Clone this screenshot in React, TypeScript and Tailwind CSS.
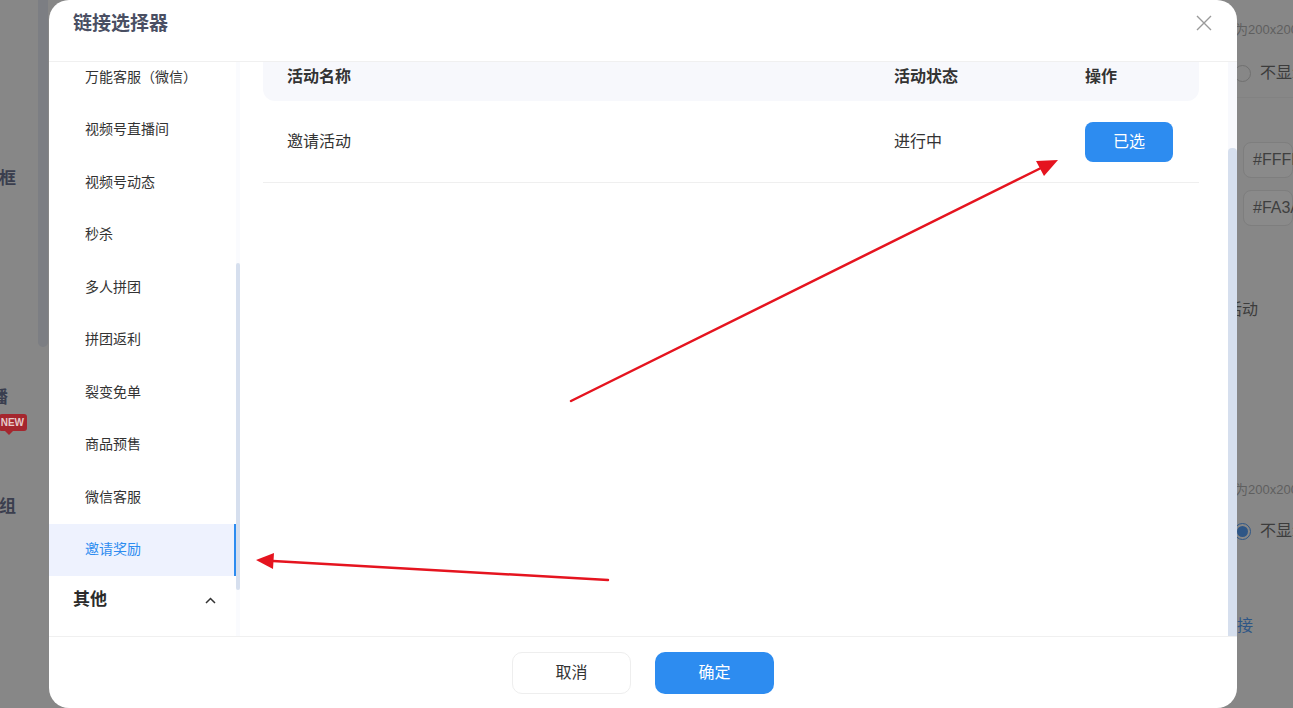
const menus = [
  '万能客服（微信）',
  '视频号直播间',
  '视频号动态',
  '秒杀',
  '多人拼团',
  '拼团返利',
  '裂变免单',
  '商品预售',
  '微信客服',
  '邀请奖励',
];

function PageLeft() {
  return (
    <div className="flex w-[49px] shrink-0">
      <div className="flex w-[38px] flex-col overflow-hidden">
        <div className="mt-[168px] flex h-[22px] items-center justify-end pr-[22px] whitespace-nowrap text-[17px] font-bold text-[#3a3e4e]">
          输入框
        </div>
        <div className="mt-[197px] flex h-[22px] items-center justify-end pr-[30px] whitespace-nowrap text-[17px] font-bold text-[#3a3e4e]">
          直播
        </div>
        <div className="mt-[5px] flex justify-end pr-[11px]">
          <div className="relative flex h-[17px] items-center rounded-[3px] bg-[#a5262e] pl-[2px] pr-[3px] text-[10px] font-bold leading-none text-[#e6caca]">
            NEW
            <span className="absolute -bottom-[4px] left-[6px] h-0 w-0 border-x-[4px] border-t-[4px] border-x-transparent border-t-[#a5262e]" />
          </div>
        </div>
        <div className="mt-[65px] flex h-[22px] items-center justify-end pr-[22px] whitespace-nowrap text-[17px] font-bold text-[#3a3e4e]">
          分组
        </div>
      </div>
      <div className="h-[347px] w-[10px] rounded-b-[5px] bg-[#7c7e83]" />
    </div>
  );
}

function PageRight() {
  return (
    <div className="flex w-[72px] shrink-0 flex-col overflow-hidden whitespace-nowrap">
      <div className="mt-[20px] flex h-[20px] items-center pl-[14px] text-[13px] text-[#5f5f5f]">
        为200x200
      </div>
      <div className="mt-[23px] flex h-[20px] items-center gap-[9px] pl-[13px]">
        <span className="h-[17px] w-[17px] shrink-0 rounded-full border border-[#707070]" />
        <span className="text-[16px] text-[#3c3c3c]">不显示</span>
      </div>
      <div className="mt-[14px] h-px bg-[#828282]" />
      <div className="mt-[44px] ml-[22px] flex h-[36px] items-center rounded-[8px] border border-[#7e7e7e] bg-[#8a8a8a] pl-[9px] text-[16px] text-[#3f3f3f]">
        #FFFFFF
      </div>
      <div className="mt-[12px] ml-[22px] flex h-[36px] items-center rounded-[8px] border border-[#7e7e7e] bg-[#8a8a8a] pl-[9px] text-[16px] text-[#3f3f3f]">
        #FA3A3A
      </div>
      <div className="mt-[74px] flex h-[20px] items-center pl-[5px] text-[16px] text-[#3c3c3c]">
        活动
      </div>
      <div className="mt-[160px] flex h-[20px] items-center pl-[14px] text-[13px] text-[#5f5f5f]">
        为200x200
      </div>
      <div className="mt-[21px] flex h-[20px] items-center gap-[9px] pl-[13px]">
        <span className="flex h-[17px] w-[17px] shrink-0 items-center justify-center rounded-full border border-[#2e5686]">
          <span className="h-[11px] w-[11px] rounded-full bg-[#2e5686]" />
        </span>
        <span className="text-[16px] text-[#3c3c3c]">不显示</span>
      </div>
      <div className="mt-[75px] flex h-[20px] items-center text-[16px] text-[#2e5686]">
        链接
      </div>
    </div>
  );
}

export default function App() {
  return (
    <div className="relative h-[708px] w-[1293px] overflow-hidden bg-[#878787] font-['Liberation_Sans','Noto_Sans_CJK_SC',sans-serif]">
      {/* dimmed page behind the dialog */}
      <div className="flex h-full justify-between">
        <PageLeft />
        <PageRight />
      </div>

      {/* dialog */}
      <div className="absolute left-[49px] top-0 flex h-[708px] w-[1188px] flex-col overflow-hidden rounded-[20px] bg-white">
        <div className="flex h-[62px] shrink-0 items-start justify-between border-b border-[#f0f0f0] pl-[24px] pr-[25px]">
          <h2 className="pt-[11px] text-[19px] font-bold leading-[26px] text-[#4a4f63]">链接选择器</h2>
          <svg width="16" height="16" viewBox="0 0 16 16" className="mt-[15px]" fill="none" stroke="#9a9a9a" strokeWidth="1.4">
            <path d="M1 1 15 15M15 1 1 15" />
          </svg>
        </div>

        <div className="flex min-h-0 flex-1">
          {/* menu */}
          <div className="flex w-[191px] shrink-0">
            <div className="w-[187px] overflow-hidden">
              <div className="-mt-[11px]">
                {menus.map((m, i) => {
                  const active = i === menus.length - 1;
                  return (
                    <div
                      key={m}
                      className={`flex h-[52.5px] items-center pl-[36px] text-[14px] ${
                        active ? 'border-r-2 border-[#2d8cf0] bg-[#eef2fe] text-[#2d8cf0]' : 'text-[#333]'
                      }`}
                    >
                      {m}
                    </div>
                  );
                })}
                <div className="flex h-[48px] items-center justify-between pl-[24px] pr-[20px]">
                  <span className="text-[17px] font-bold text-[#2b2b2b]">其他</span>
                  <svg width="11" height="7" viewBox="0 0 11 7" fill="none" stroke="#333" strokeWidth="1.5">
                    <path d="M1 6 5.5 1.5 10 6" />
                  </svg>
                </div>
              </div>
            </div>
            <div className="w-[4px] bg-[#fafbfe]">
              <div className="mt-[201px] h-[327px] rounded-[2px] bg-[#d6dfee]" />
            </div>
          </div>

          {/* table */}
          <div className="min-w-0 flex-1 overflow-hidden pl-[23px] pr-[29px]">
            <div className="-mt-[10px] grid h-[49px] grid-cols-[607px_191px_1fr] items-center rounded-[12px] bg-[#f7f8fc] text-[16px] font-bold text-[#333]">
              <div className="px-[24px]">活动名称</div>
              <div className="px-[24px]">活动状态</div>
              <div className="px-[24px]">操作</div>
            </div>
            <div className="grid h-[82px] grid-cols-[607px_191px_1fr] items-center border-b border-[#efefef] text-[16px] text-[#333]">
              <div className="px-[24px] pt-[1px]">邀请活动</div>
              <div className="px-[24px] pt-[1px]">进行中</div>
              <div className="px-[24px]">
                <button className="h-[40px] w-[88px] rounded-[8px] bg-[#2d8cf0] text-[16px] text-white">已选</button>
              </div>
            </div>
          </div>
          <div className="flex w-[9px] shrink-0 flex-col bg-[#f8f9fd]">
            <div className="mt-[86px] flex-1 rounded-t-[4px] bg-[#d6dfee]" />
          </div>
        </div>

        <div className="flex h-[72px] shrink-0 items-center justify-center gap-[24px] border-t border-[#f0f0f0]">
          <button className="h-[42px] w-[119px] rounded-[10px] border border-[#eeeeee] bg-white text-[16px] text-[#333]">取消</button>
          <button className="h-[42px] w-[119px] rounded-[10px] bg-[#2d8cf0] text-[16px] text-white">确定</button>
        </div>
      </div>

      {/* annotation arrows */}
      <svg className="pointer-events-none absolute inset-0" width="1293" height="708" viewBox="0 0 1293 708">
        <g stroke="#e5141f" strokeWidth="2.5" fill="#e5141f" strokeLinecap="round">
          <line x1="571" y1="401" x2="1041" y2="168" />
          <polygon points="1058,160 1044,176 1036,161" stroke="none" />
          <line x1="608" y1="580" x2="273" y2="561" />
          <polygon points="256,560 274,553 273,569" stroke="none" />
        </g>
      </svg>
    </div>
  );
}
